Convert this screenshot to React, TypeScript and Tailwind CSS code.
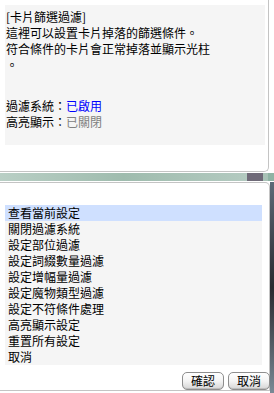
import React from "react";

const font = { fontFamily: '"Noto Sans CJK TC", "Noto Sans CJK SC", sans-serif' };

const items = [
  "查看當前設定",
  "關閉過濾系統",
  "設定部位過濾",
  "設定詞綴數量過濾",
  "設定增幅量過濾",
  "設定魔物類型過濾",
  "設定不符條件處理",
  "高亮顯示設定",
  "重置所有設定",
  "取消",
];

function Btn({ label }: { label: string }) {
  return (
    <div className="w-[42px] h-[18px] rounded-[5px] border border-[#8e8e8e] bg-gradient-to-b from-white via-[#f4f4f4] to-[#d6d6d6] shadow-[inset_0_-1px_0_#bdbdbd] flex items-center justify-center text-[12px] leading-[14px] text-black">
      {label}
    </div>
  );
}

export default function App() {
  return (
    <div className="w-[274px] h-[393px] bg-white overflow-hidden flex flex-col" style={font}>
      {/* top panel */}
      <div className="flex">
        <div className="w-[269px] h-[172px] border-r border-b border-[#c4c4c4] rounded-br-[5px] pt-[5px] pl-[5px]">
          <div className="w-[260px] h-[140px] bg-[#f5f5f5] pt-[4px] pl-[1px] text-[12px] leading-[16px] text-black">
            <div>[卡片篩選過濾]</div>
            <div>這裡可以設置卡片掉落的篩選條件。</div>
            <div>符合條件的卡片會正常掉落並顯示光柱</div>
            <div>。</div>
            <div className="mt-[25px]">
              過濾系統：<span className="text-[#0000ff]">已啟用</span>
            </div>
            <div>
              高亮顯示：<span className="text-[#808080]">已關閉</span>
            </div>
          </div>
        </div>
        <div className="w-[5px]" />
      </div>

      {/* divider strip */}
      <div className="h-[10px] flex flex-col">
        <div className="h-[1px]" />
        <div className="h-[8px] flex">
          <div className="w-[247px] bg-gradient-to-r from-[#b9cfc5] via-[#9fbcae] to-[#b3cac0]" />
          <div className="w-[16px] bg-[#6f6a78]" />
          <div className="w-[5px] bg-[#a8c2b6]" />
          <div className="flex-1 bg-[#8fb3a4]" />
        </div>
        <div className="h-[1px]" />
      </div>

      {/* bottom panel */}
      <div className="flex">
        <div className="w-[270px] h-[209px] border-t border-r border-b border-[#c4c4c4] rounded-tr-[5px] pt-[22px] pl-[5px] flex flex-col">
          <div className="w-[257px] h-[160px] bg-[#f5f5f5] text-[12px] leading-[16px] text-black">
            {items.map((t, i) => (
              <div key={i} className={"h-[16px] pl-[3px] " + (i === 0 ? "bg-[#cfe0ff]" : "")}>
                {t}
              </div>
            ))}
          </div>
          <div className="mt-[7px] flex justify-end gap-[4px] mr-[-1px]">
            <Btn label="確認" />
            <Btn label="取消" />
          </div>
        </div>
        <div className="w-[4px] h-[211px] bg-gradient-to-b from-[#5d6b78] via-[#2a2a30] to-[#7a8a96]" />
      </div>
    </div>
  );
}
